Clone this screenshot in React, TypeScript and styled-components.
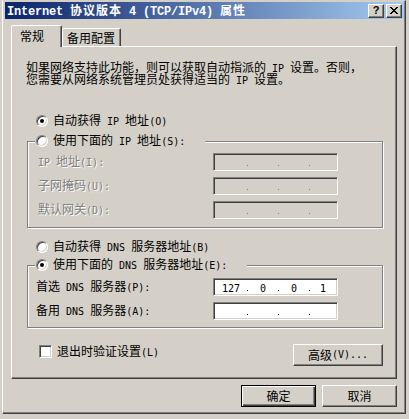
import React from 'react';
import styled, { createGlobalStyle } from 'styled-components';

const FACE = '#d4d0c8';
const SHADOW = '#808080';
const DARK = '#404040';
const HI = '#ffffff';

const Global = createGlobalStyle`
  html, body { margin: 0; padding: 0; background: ${FACE}; }
  body {
    width: 409px; height: 419px; overflow: hidden;
    font-family: "Noto Sans CJK SC", sans-serif;
    font-size: 12px; color: #000;
  }
  * { box-sizing: border-box; }
`;

/* Latin runs: SimSun-like half-width (6px) monospace */
const Lt = styled.span`
  font-family: "DejaVu Sans Mono", "Liberation Mono", monospace;
  font-size: 10px;
`;

const TitleLt = styled.span`
  font-family: "Liberation Mono", monospace;
  font-size: 12px;
  font-weight: bold;
  letter-spacing: -0.2px;
`;

type SpanComp = typeof Lt;

function Txt({ s, L = Lt }: { s: string; L?: SpanComp }) {
  const parts = s.match(/[\x00-\x7f]+|[^\x00-\x7f]+/g) || [];
  return (
    <>
      {parts.map((p, i) =>
        /^[\x00-\x7f]/.test(p) ? <L key={i}>{p}</L> : <React.Fragment key={i}>{p}</React.Fragment>
      )}
    </>
  );
}

const Window = styled.div`
  margin-left: 2px;
  width: 404px;
  height: 414px;
  border-style: solid;
  border-width: 1px;
  border-color: ${FACE} ${DARK} ${DARK} ${HI};
  box-shadow: inset -1px -1px 0 ${SHADOW};
  padding: 1px 1px 2px 2px;
  display: flex;
  flex-direction: column;
`;

const TitleBar = styled.div`
  height: 17px;
  flex: none;
  background: linear-gradient(to right, #0a246a, #a6caf0);
  display: flex;
  align-items: center;
  padding: 0 2px;
`;

const TitleText = styled.div`
  flex: 1;
  color: #fff;
  font-weight: bold;
  font-size: 12px;
  line-height: 12px;
  letter-spacing: 1px;
  white-space: pre;
`;

const CapButton = styled.div<{ $gap?: number }>`
  width: 16px;
  height: 14px;
  flex: none;
  margin-left: ${(p) => p.$gap ?? 0}px;
  background: ${FACE};
  border: 1px solid;
  border-color: ${HI} ${DARK} ${DARK} ${HI};
  box-shadow: inset -1px -1px 0 ${SHADOW};
  display: flex;
  align-items: center;
  justify-content: center;
`;

const HelpGlyph = styled.span`
  font-family: "Liberation Sans", sans-serif;
  font-weight: bold;
  font-size: 11px;
  line-height: 11px;
  color: #000;
`;

const X_ROWS = ['11000011', '01100110', '00111100', '00011000', '00111100', '01100110', '11000011'];

function CloseIcon() {
  return (
    <svg width="8" height="7" viewBox="0 0 8 7" shapeRendering="crispEdges">
      {X_ROWS.flatMap((r, y) =>
        r.split('').map((c, x) =>
          c === '1' ? <rect key={`${x}-${y}`} x={x} y={y} width={1} height={1} fill="#000" /> : null
        )
      )}
    </svg>
  );
}

const Body = styled.div`
  flex: 1;
  display: flex;
  flex-direction: column;
  padding: 0 7px 0 6px;
`;

const TabStrip = styled.div`
  display: flex;
  align-items: flex-end;
  height: 21px;
  margin-top: 6px;
  flex: none;
`;

const Tab = styled.div<{ $active?: boolean; $w: number }>`
  width: ${(p) => p.$w}px;
  height: ${(p) => (p.$active ? 22 : 18)}px;
  margin-bottom: ${(p) => (p.$active ? -1 : 0)}px;
  position: relative;
  z-index: ${(p) => (p.$active ? 1 : 0)};
  background: ${FACE};
  border-style: solid;
  border-width: 1px 1px 0 1px;
  border-color: ${HI} ${DARK} transparent ${HI};
  border-top-left-radius: 2px;
  border-top-right-radius: 2px;
  box-shadow: inset -1px 0 0 ${SHADOW};
  padding: ${(p) => (p.$active ? '4px 0 0 8px' : '3px 0 0 4px')};
  line-height: 12px;
  white-space: pre;
`;

const Panel = styled.div`
  height: 333px;
  flex: none;
  border: 1px solid;
  border-color: ${HI} ${DARK} ${DARK} ${HI};
  box-shadow: inset -1px -1px 0 ${SHADOW};
  padding: 14px 13px 0 14px;
  display: flex;
  flex-direction: column;
`;

const Desc = styled.div`
  display: flex;
  flex-direction: column;
`;

const Line = styled.div`
  height: 12px;
  line-height: 12px;
  white-space: pre;
`;

const OptionRow = styled.div<{ $mt: number }>`
  display: flex;
  align-items: center;
  gap: 5px;
  height: 12px;
  line-height: 12px;
  margin: ${(p) => p.$mt}px 0 0 10px;
  white-space: pre;
`;

const Radio = styled.span<{ $checked?: boolean }>`
  position: relative;
  width: 12px;
  height: 12px;
  flex: none;
  border-radius: 50%;
  background: #fff;
  border: 1px solid;
  border-color: ${SHADOW} ${HI} ${HI} ${SHADOW};
  box-shadow: inset 1px 1px 0 ${DARK}, inset -1px -1px 0 ${FACE};
  &::after {
    content: '';
    display: ${(p) => (p.$checked ? 'block' : 'none')};
    position: absolute;
    left: 3px;
    top: 3px;
    width: 4px;
    height: 4px;
    border-radius: 50%;
    background: #000;
  }
`;

const Group = styled.div<{ $mt: number; $h: number }>`
  margin: ${(p) => p.$mt}px 0 0 1px;
  height: ${(p) => p.$h}px;
  flex: none;
  border: 1px solid ${SHADOW};
  box-shadow: inset 1px 1px 0 ${HI}, 1px 1px 0 ${HI};
  padding: 0 44px 0 0;
  display: flex;
  flex-direction: column;
`;

const Legend = styled.div`
  align-self: flex-start;
  margin: -7px 0 0 7px;
  padding: 0 20px 0 1px;
  background: ${FACE};
  display: flex;
  align-items: center;
  gap: 5px;
  height: 12px;
  line-height: 12px;
  white-space: pre;
`;

const Fields = styled.div<{ $mt: number }>`
  display: flex;
  flex-direction: column;
  gap: 6px;
  margin-top: ${(p) => p.$mt}px;
`;

const FieldRow = styled.div<{ $indent: number }>`
  display: grid;
  grid-template-columns: 1fr 125px;
  align-items: center;
  height: 18px;
  padding-left: ${(p) => p.$indent}px;
`;

const FieldLabel = styled.span<{ $disabled?: boolean }>`
  line-height: 12px;
  white-space: pre;
  color: ${(p) => (p.$disabled ? SHADOW : '#000')};
  text-shadow: ${(p) => (p.$disabled ? `1px 1px 0 ${HI}` : 'none')};
`;

const IpBox = styled.div<{ $disabled?: boolean }>`
  width: 125px;
  height: 18px;
  background: ${(p) => (p.$disabled ? FACE : '#fff')};
  border: 1px solid;
  border-color: ${SHADOW} ${HI} ${HI} ${SHADOW};
  box-shadow: inset 1px 1px 0 ${DARK}, inset -1px -1px 0 ${FACE};
  padding: 1px;
  display: grid;
  grid-template-columns: 32px 1px 30px 1px 30px 1px 26px;
`;

const Octet = styled.span`
  text-align: center;
  line-height: 14px;
  height: 14px;
`;

const Dot = styled.span<{ $disabled?: boolean }>`
  align-self: end;
  width: 1px;
  height: 1px;
  margin-bottom: 3px;
  background: ${(p) => (p.$disabled ? SHADOW : '#000')};
`;

function IpField({ value, disabled }: { value?: string[]; disabled?: boolean }) {
  const v = value ?? ['', '', '', ''];
  return (
    <IpBox $disabled={disabled}>
      {v.map((o, i) => (
        <React.Fragment key={i}>
          {i > 0 && <Dot $disabled={disabled} />}
          <Octet>
            <Lt>{o}</Lt>
          </Octet>
        </React.Fragment>
      ))}
    </IpBox>
  );
}

const BottomRow = styled.div`
  display: flex;
  justify-content: space-between;
  align-items: flex-start;
  margin-top: 16px;
`;

const CheckLabel = styled.div`
  display: flex;
  align-items: center;
  gap: 5px;
  height: 13px;
  line-height: 12px;
  margin: 1px 0 0 13px;
  white-space: pre;
`;

const Check = styled.span`
  width: 13px;
  height: 13px;
  flex: none;
  background: #fff;
  border: 1px solid;
  border-color: ${SHADOW} ${HI} ${HI} ${SHADOW};
  box-shadow: inset 1px 1px 0 ${DARK}, inset -1px -1px 0 ${FACE};
`;

const Button = styled.div<{ $w: number; $default?: boolean }>`
  width: ${(p) => p.$w}px;
  height: 22px;
  flex: none;
  background: ${FACE};
  border: 1px solid;
  border-color: ${(p) => (p.$default ? '#000' : `${HI} ${DARK} ${DARK} ${HI}`)};
  box-shadow: ${(p) =>
    p.$default
      ? `inset 1px 1px 0 ${HI}, inset -1px -1px 0 ${DARK}, inset -2px -2px 0 ${SHADOW}`
      : `inset -1px -1px 0 ${SHADOW}`};
  display: flex;
  align-items: center;
  justify-content: center;
  line-height: 12px;
  white-space: pre;
`;

const Footer = styled.div`
  display: flex;
  justify-content: flex-end;
  gap: 6px;
  margin-top: 6px;
`;

const ipRows = ['IP 地址(I):', '子网掩码(U):', '默认网关(D):'];

export default function App() {
  return (
    <>
      <Global />
      <Window>
        <TitleBar>
          <TitleText>
            <Txt s="Internet 协议版本 4 (TCP/IPv4) 属性" L={TitleLt} />
          </TitleText>
          <CapButton>
            <HelpGlyph>?</HelpGlyph>
          </CapButton>
          <CapButton $gap={2}>
            <CloseIcon />
          </CapButton>
        </TitleBar>
        <Body>
          <TabStrip>
            <Tab $active $w={51}>常规</Tab>
            <Tab $w={59}>备用配置</Tab>
          </TabStrip>
          <Panel>
            <Desc>
              <Line>
                <Txt s="如果网络支持此功能，则可以获取自动指派的 IP 设置。否则，" />
              </Line>
              <Line>
                <Txt s="您需要从网络系统管理员处获得适当的 IP 设置。" />
              </Line>
            </Desc>
            <OptionRow $mt={30}>
              <Radio $checked />
              <span>
                <Txt s="自动获得 IP 地址(O)" />
              </span>
            </OptionRow>
            <Group $mt={14} $h={87}>
              <Legend>
                <Radio />
                <span>
                  <Txt s="使用下面的 IP 地址(S):" />
                </span>
              </Legend>
              <Fields $mt={6}>
                {ipRows.map((l) => (
                  <FieldRow key={l} $indent={10}>
                    <FieldLabel $disabled>
                      <Txt s={l} />
                    </FieldLabel>
                    <IpField disabled />
                  </FieldRow>
                ))}
              </Fields>
            </Group>
            <OptionRow $mt={13}>
              <Radio />
              <span>
                <Txt s="自动获得 DNS 服务器地址(B)" />
              </span>
            </OptionRow>
            <Group $mt={12} $h={63}>
              <Legend>
                <Radio $checked />
                <span>
                  <Txt s="使用下面的 DNS 服务器地址(E):" />
                </span>
              </Legend>
              <Fields $mt={7}>
                <FieldRow $indent={8}>
                  <FieldLabel>
                    <Txt s="首选 DNS 服务器(P):" />
                  </FieldLabel>
                  <IpField value={['127', '0', '0', '1']} />
                </FieldRow>
                <FieldRow $indent={8}>
                  <FieldLabel>
                    <Txt s="备用 DNS 服务器(A):" />
                  </FieldLabel>
                  <IpField />
                </FieldRow>
              </Fields>
            </Group>
            <BottomRow>
              <CheckLabel>
                <Check />
                <span>
                  <Txt s="退出时验证设置(L)" />
                </span>
              </CheckLabel>
              <Button $w={90}>
                <Txt s="高级(V)..." />
              </Button>
            </BottomRow>
          </Panel>
          <Footer>
            <Button $w={75} $default>
              确定
            </Button>
            <Button $w={75}>取消</Button>
          </Footer>
        </Body>
      </Window>
    </>
  );
}
